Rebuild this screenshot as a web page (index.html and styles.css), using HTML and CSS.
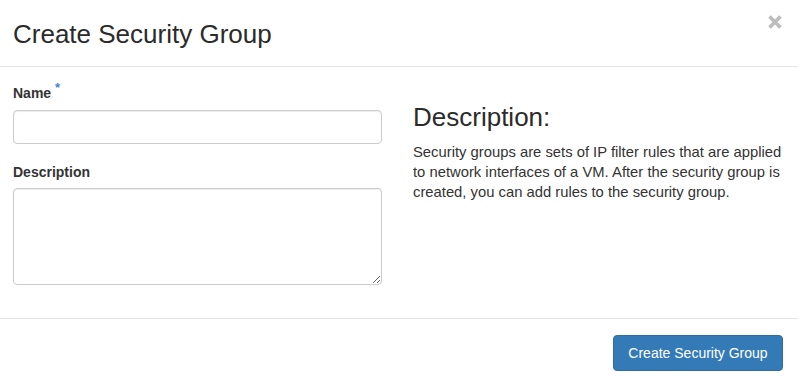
FILE: index.html
```html
<!DOCTYPE html>
<html lang="en">
<head>
<meta charset="utf-8">
<title>Create Security Group</title>
<link rel="stylesheet" href="styles.css">
</head>
<body>
<div class="modal">
  <div class="modal-header">
    <h3 class="modal-title">Create Security Group</h3>
    <button class="close" type="button" aria-label="Close">
      <svg width="16" height="14" viewBox="0 0 16 14"><path d="M2.5 1.5 L13.5 12.5 M13.5 1.5 L2.5 12.5" stroke="#bcbcbc" stroke-width="3.6" stroke-linecap="butt" fill="none"/></svg>
    </button>
  </div>
  <div class="modal-body">
    <div class="col-form">
      <div class="form-group">
        <label class="control-label" for="name">Name <span class="req">*</span></label>
        <input class="form-control" id="name" type="text">
      </div>
      <div class="form-group">
        <label class="control-label" for="desc">Description</label>
        <textarea class="form-control textarea" id="desc"></textarea>
      </div>
    </div>
    <div class="col-help">
      <h3 class="help-title">Description:</h3>
      <p class="help-text">Security groups are sets of IP filter rules that are applied to network interfaces of a VM. After the security group is created, you can add rules to the security group.</p>
    </div>
  </div>
  <div class="modal-footer">
    <button class="btn btn-primary" type="button">Create Security Group</button>
  </div>
</div>
</body>
</html>
```
FILE: styles.css
```css
* { box-sizing: border-box; }
html, body {
  margin: 0;
  padding: 0;
  background: #fff;
}
body {
  font-family: "Liberation Sans", Arial, Helvetica, sans-serif;
  font-size: 14px;
  line-height: 20px;
  color: #333;
}
.modal {
  width: 798px;
  height: 384px;
  background: #fff;
}
.modal-header {
  display: flex;
  justify-content: space-between;
  align-items: flex-start;
  height: 67px;
  padding: 16px 15px 14px 13px;
  border-bottom: 1px solid #e5e5e5;
}
.modal-title {
  margin: 0;
  font-size: 26px;
  line-height: 36px;
  font-weight: 500;
  color: #2b2b2b;
}
.close {
  margin: -1px 0 0 0;
  padding: 0;
  border: 0;
  background: transparent;
  width: 16px;
  height: 14px;
  line-height: 0;
  cursor: pointer;
}
.modal-body {
  display: grid;
  grid-template-columns: 369px 1fr;
  column-gap: 31px;
  padding: 16px 15px 0 13px;
  height: 252px;
  border-bottom: 1px solid #e5e5e5;
}
.form-group {
  display: flex;
  flex-direction: column;
  margin-bottom: 18px;
}
.control-label {
  font-weight: bold;
  font-size: 14px;
  line-height: 20px;
  margin-bottom: 6px;
}
.req {
  color: #3a87d6;
  font-size: 13px;
  position: relative;
  top: -6px;
}
.form-control {
  display: block;
  width: 100%;
  height: 34px;
  padding: 6px 12px;
  font-family: inherit;
  font-size: 14px;
  color: #555;
  background: #fff;
  border: 1px solid #ccc;
  border-radius: 4px;
  box-shadow: inset 0 1px 1px rgba(0,0,0,.075);
}
.textarea {
  height: 97px;
  resize: vertical;
}
.help-title {
  margin: 20px 0 10px 0;
  font-size: 26px;
  line-height: 28.6px;
  font-weight: 500;
  color: #2b2b2b;
}
.help-text {
  margin: 0;
  font-size: 14.8px;
  line-height: 20px;
}
.modal-footer {
  display: flex;
  justify-content: flex-end;
  padding: 16px 15px;
}
.btn {
  font-family: inherit;
  font-size: 14px;
  line-height: 20px;
  padding: 7px 14px;
  width: 170px;
  height: 36px;
  border-radius: 4px;
  cursor: pointer;
}
.btn-primary {
  color: #fff;
  background: #337ab7;
  border: 1px solid #2e6da4;
}
```
